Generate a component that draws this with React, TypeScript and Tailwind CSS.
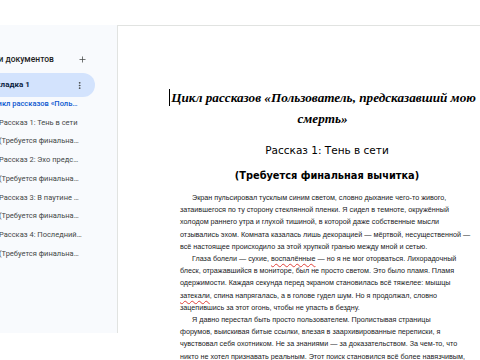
import { Plus, EllipsisVertical } from "lucide-react";

const outline = [
  { text: "Цикл рассказов «Пользователь, предсказавший мою смерть»", shift: "-ml-[8px]", w: "w-[88px]", active: true },
  { text: "Рассказ 1: Тень в сети", shift: "-ml-[1px]", w: "w-[83px]" },
  { text: "(Требуется финальная вычитка)", shift: "-ml-[1px]", w: "w-[83px]" },
  { text: "Рассказ 2: Эхо предсказания", shift: "-ml-[1px]", w: "w-[83px]" },
  { text: "(Требуется финальная вычитка)", shift: "-ml-[1px]", w: "w-[83px]" },
  { text: "Рассказ 3: В паутине правды", shift: "-ml-[1px]", w: "w-[83px]" },
  { text: "(Требуется финальная вычитка)", shift: "-ml-[1px]", w: "w-[83px]" },
  { text: "Рассказ 4: Последний пост", shift: "-ml-[1px]", w: "w-[83px]" },
  { text: "(Требуется финальная вычитка)", shift: "-ml-[1px]", w: "w-[83px]" },
];

const Sidebar = () => (
  <aside className="w-[118px] h-[308px] shrink-0 overflow-hidden bg-[#f8fafd] border-r border-[#e1e3e1] font-['Roboto',sans-serif] pt-[24px]">
    <div className="h-[20px] flex items-center">
      <span className="-ml-[31px] w-[109px] text-[8.5px] font-medium text-[#1f1f1f] whitespace-nowrap">
        Вкладки документов
      </span>
      <Plus className="w-[9px] h-[9px] text-[#444746]" strokeWidth={2} />
    </div>
    <div className="mt-[4px] h-[24px] w-[95px] rounded-r-full bg-[#d3e3fd] flex items-center">
      <span className="-ml-[9px] w-[84px] text-[8px] font-bold text-[#0b1d3f] whitespace-nowrap">Вкладка 1</span>
      <EllipsisVertical className="w-[9px] h-[9px] text-[#444746]" strokeWidth={2.5} />
    </div>
    <ul className="-mt-[3px]">
      {outline.map((item, i) => (
        <li key={i} className="h-[18.75px] flex items-center">
          <span
            className={`${item.shift} ${item.w} truncate text-[7.5px] ${
              item.active ? "text-[#0b57d0] font-medium" : "text-[#444746]"
            }`}
          >
            {item.text}
          </span>
        </li>
      ))}
    </ul>
  </aside>
);

const Spell = ({ children }: { children: string }) => (
  <span className="underline decoration-wavy decoration-[#e0413a] decoration-[0.8px] underline-offset-[1.5px]">{children}</span>
);

const paragraphs = [
  [
    "Экран пульсировал тусклым синим светом, словно дыхание чего-то живого,",
    "затаившегося по ту сторону стеклянной пленки. Я сидел в темноте, окружённый",
    "холодом раннего утра и глухой тишиной, в которой даже собственные мысли",
    "отзывались эхом. Комната казалась лишь декорацией — мёртвой, несущественной —",
    "всё настоящее происходило за этой хрупкой гранью между мной и сетью.",
  ],
  [
    <>Глаза болели — сухие, <Spell>воспалённые</Spell> — но я не мог оторваться. Лихорадочный</>,
    "блеск, отражавшийся в мониторе, был не просто светом. Это было пламя. Пламя",
    "одержимости. Каждая секунда перед экраном становилась всё тяжелее: мышцы",
    <><Spell>затекали</Spell>, спина напрягалась, а в голове гудел шум. Но я продолжал, словно</>,
    "зацепившись за этот огонь, чтобы не упасть в бездну.",
  ],
  [
    "Я давно перестал быть просто пользователем. Пролистывая страницы",
    "форумов, выискивая битые ссылки, влезая в заархивированные переписки, я",
    "чувствовал себя охотником. Не за знаниями — за доказательством. За чем-то, что",
    "никто не хотел признавать реальным. Этот поиск становился всё более навязчивым,",
  ],
];

const Document = () => (
  <main className="flex-1 h-[335px] border-t border-[#e1e3e1] bg-white overflow-hidden">
    <div className="ml-[62px] w-[294px] pt-[61px]">
      <div className="pr-[9px] flex flex-col items-center font-['Liberation_Serif',serif] italic font-bold text-[13.2px] leading-[21px] text-black">
        <div className="whitespace-nowrap flex items-center">
          <span className="inline-block w-[1px] h-[17px] bg-black mr-[1px]" />
          Цикл рассказов «Пользователь, предсказавший мою
        </div>
        <div className="whitespace-nowrap">смерть»</div>
      </div>
      <div className="mt-[14px] flex justify-center font-['DejaVu_Sans',sans-serif] text-[10.5px] leading-[14px] text-black whitespace-nowrap">
        Рассказ 1: Тень в сети
      </div>
      <div className="mt-[11px] flex justify-center font-['DejaVu_Sans',sans-serif] font-bold text-[9.8px] leading-[15px] text-black whitespace-nowrap">
        (Требуется финальная вычитка)
      </div>
      <div className="mt-[9px] font-['Liberation_Sans',Arial,sans-serif] text-[7.2px] leading-[12.2px] text-[#202124]">
        {paragraphs.map((lines, p) => (
          <p key={p}>
            {lines.map((line, i) => (
              <span key={i} className={`block whitespace-nowrap ${i === 0 ? "pl-[12px]" : ""}`}>
                {line}
              </span>
            ))}
          </p>
        ))}
      </div>
    </div>
  </main>
);

export default function App() {
  return (
    <div className="w-[480px] h-[360px] bg-white overflow-hidden">
      <div className="h-[25px]" />
      <div className="flex items-start">
        <Sidebar />
        <Document />
      </div>
    </div>
  );
}
